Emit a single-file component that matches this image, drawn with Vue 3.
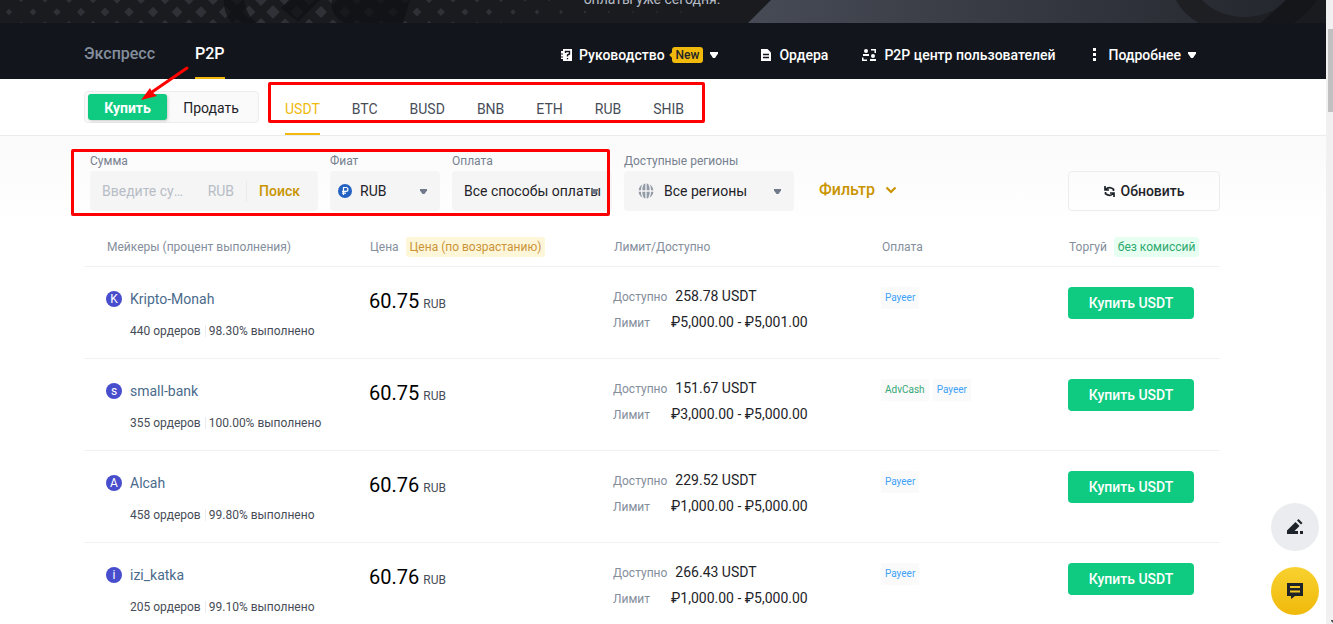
<script setup>
const navTabs = [
  { label: 'Экспресс', active: false },
  { label: 'P2P', active: true },
]
const coins = ['USDT', 'BTC', 'BUSD', 'BNB', 'ETH', 'RUB', 'SHIB']
const offers = [
  { letter: 'K', name: 'Kripto-Monah', orders: '440 ордеров', rate: '98.30% выполнено', price: '60.75', available: '258.78 USDT', limit: '₽5,000.00 - ₽5,001.00', methods: ['Payeer'] },
  { letter: 's', name: 'small-bank', orders: '355 ордеров', rate: '100.00% выполнено', price: '60.75', available: '151.67 USDT', limit: '₽3,000.00 - ₽5,000.00', methods: ['AdvCash', 'Payeer'] },
  { letter: 'A', name: 'Alcah', orders: '458 ордеров', rate: '99.80% выполнено', price: '60.76', available: '229.52 USDT', limit: '₽1,000.00 - ₽5,000.00', methods: ['Payeer'] },
  { letter: 'i', name: 'izi_katka', orders: '205 ордеров', rate: '99.10% выполнено', price: '60.76', available: '266.43 USDT', limit: '₽1,000.00 - ₽5,000.00', methods: ['Payeer'] },
]

function diamond(cx, cy) {
  const r = Math.max(1, cx < 260 ? 3 + cx / 70 : 7 - (cx - 260) / 60)
  return `M${cx - r} ${cy}L${cx} ${cy - r}L${cx + r} ${cy}L${cx} ${cy + r}Z`
}
const diamonds = []
for (let i = 0; i < 29; i++) {
  diamonds.push(diamond(9 + i * 24, 12))
  if (i < 24) diamonds.push(diamond(21 + i * 24, -1), diamond(21 + i * 24, 25))
}
const diamondPath = diamonds.join('')
</script>

<template>
  <div class="page">
    <div class="content">
      <div class="banner">
        <svg class="banner-art" width="1326" height="23" viewBox="0 0 1326 23" aria-hidden="true">
          <defs>
            <linearGradient id="steel" x1="0" x2="1">
              <stop offset="0" stop-color="#474b55" />
              <stop offset="1" stop-color="#24272e" />
            </linearGradient>
          </defs>
          <path :d="diamondPath" fill="#303136" />
          <path d="M224 0h20q2 14 12 23h-24q-9-10-8-23ZM281 8l8-8h31l-22 22ZM332 0h78l-7 23h-59q-15-9-12-23Z" fill="#101114" opacity=".75" />
          <path d="M771 0h516l-23 23H748Z" fill="url(#steel)" />
          <path d="M1176 0h26q16 17 44 17 22 0 44-17h27q-12 15-25 23h-93q-16-9-23-23Z" fill="#1e1f23" />
          <path d="M1286 0h31q-10 15-24 23h-32Z" fill="#15161a" />
        </svg>
        <p class="banner-text">оплаты уже сегодня.</p>
      </div>

      <header class="topnav">
        <nav class="nav-tabs">
          <a v-for="tab in navTabs" :key="tab.label" href="#" :class="{ active: tab.active }">{{ tab.label }}</a>
        </nav>
        <nav class="nav-links">
          <a href="#" class="guide">
            <svg width="11" height="14" viewBox="0 0 11 14"><path d="M2 1h9v12H2v-2H0V9.500h2v-1H0v-2h2v-1H0V3h2z" fill="#fff" /><path d="M4.500 5V3.500h4V6L6.500 7v1.500M6.500 10v1.300" fill="none" stroke="#12161c" stroke-width="1.400" /></svg>
            <span>Руководство</span>
            <b class="new">New</b>
            <svg class="caret" width="8" height="6" viewBox="0 0 8 6"><path d="M0 0h8v1.500L5 6H3L0 1.500z" fill="currentColor" /></svg>
          </a>
          <a href="#">
            <svg width="12" height="14" viewBox="0 0 12 14"><path d="M1 1h6.500L11 4.500V13H1z" fill="#fff" /><path d="M3 6.500h6M3 9.500h6" stroke="#12161c" stroke-width="1.400" /></svg>
            <span>Ордера</span>
          </a>
          <a href="#">
            <svg width="15" height="14" viewBox="0 0 15 14" fill="#fff"><circle cx="4" cy="3" r="2" /><path d="M1 6h6v2H1zM9 1h5v4h-1.500V2.500H9zM0 9.500h1.500v2H5V13H0z" /><circle cx="11" cy="8" r="2" /><path d="M8 11h6v2H8z" /></svg>
            <span>P2P центр пользователей</span>
          </a>
          <a href="#" class="details">
            <svg width="4" height="14" viewBox="0 0 4 14"><path d="M0 0h3v3H0zM0 5h3v3H0zM0 10h3v3H0z" fill="#fff" /></svg>
            <span>Подробнее</span>
            <svg class="caret" width="8" height="6" viewBox="0 0 8 6"><path d="M0 0h8v1.500L5 6H3L0 1.500z" fill="currentColor" /></svg>
          </a>
        </nav>
      </header>

      <section class="trade-bar">
        <div class="side-switch">
          <button type="button" class="on">Купить</button>
          <button type="button">Продать</button>
        </div>
        <nav class="coins">
          <a v-for="(coin, i) in coins" :key="coin" href="#" :class="{ active: i === 0 }">{{ coin }}</a>
        </nav>
      </section>

      <main>
        <form class="filters" @submit.prevent>
          <div class="field amount">
            <label for="amount">Сумма</label>
            <div class="box">
              <input id="amount" type="text" placeholder="Введите сумму" />
              <span class="unit">RUB</span>
              <button type="submit">Поиск</button>
            </div>
          </div>
          <div class="field fiat">
            <label for="fiat">Фиат</label>
            <div class="box">
              <svg class="lead" width="14" height="14" viewBox="0 0 14 14"><circle cx="7" cy="7" r="7" fill="#2463c2" /><path d="M5.500 11V3.500H8a1.900 1.900 0 0 1 0 3.800H4M4 9.200h4" fill="none" stroke="#fff" stroke-width="1.200" /></svg>
              <select id="fiat"><option>RUB</option></select>
              <svg class="caret" width="7" height="5" viewBox="0 0 7 5"><path d="M0 0h7v1.500L4.500 5h-2L0 1.500z" fill="currentColor" /></svg>
            </div>
          </div>
          <div class="field payment">
            <label for="payment">Оплата</label>
            <div class="box">
              <select id="payment"><option>Все способы оплаты</option></select>
              <svg class="caret" width="7" height="5" viewBox="0 0 7 5"><path d="M0 0h7v1.500L4.500 5h-2L0 1.500z" fill="currentColor" /></svg>
            </div>
          </div>
          <div class="field region">
            <label for="region">Доступные регионы</label>
            <div class="box">
              <svg class="lead" width="16" height="16" viewBox="0 0 16 16"><circle cx="8" cy="8" r="7.500" fill="#929aa5" /><path d="M0 8h16M8 0v16M5.500 0Q1.500 8 5.500 16M10.500 0Q14.500 8 10.500 16" fill="none" stroke="#f5f5f5" stroke-width="1.300" /></svg>
              <select id="region"><option>Все регионы</option></select>
              <svg class="caret" width="7" height="5" viewBox="0 0 7 5"><path d="M0 0h7v1.500L4.500 5h-2L0 1.500z" fill="currentColor" /></svg>
            </div>
          </div>
          <button type="button" class="more">
            Фильтр
            <svg width="12" height="8" viewBox="0 0 12 8"><path d="M1.500 1.500L6 6l4.500-4.500" fill="none" stroke="currentColor" stroke-width="2.200" /></svg>
          </button>
          <button type="button" class="refresh">
            <svg width="11" height="11" viewBox="0 0 11 11" fill="none" stroke="currentColor" stroke-width="1.700"><path d="M1 0v4h4M1.500 3.500Q5 0 9.500 3.300V5M10 11V7H6M9.500 7.500Q6 11 1.500 7.700V6" /></svg>
            Обновить
          </button>
        </form>

        <table class="offers">
          <colgroup><col class="c-maker" /><col class="c-price" /><col class="c-limit" /><col class="c-pay" /><col /></colgroup>
          <thead>
            <tr>
              <th>Мейкеры (процент выполнения)</th>
              <th>Цена <mark class="sort">Цена (по возрастанию)</mark></th>
              <th>Лимит/Доступно</th>
              <th>Оплата</th>
              <th>Торгуй <mark class="free">без комиссий</mark></th>
            </tr>
          </thead>
          <tbody>
            <tr v-for="offer in offers" :key="offer.name">
              <td>
                <div class="maker"><i>{{ offer.letter }}</i><a href="#">{{ offer.name }}</a></div>
                <div class="stats"><span>{{ offer.orders }}</span><span>{{ offer.rate }}</span></div>
              </td>
              <td><div class="price"><strong>{{ offer.price }}</strong><small>RUB</small></div></td>
              <td>
                <dl>
                  <div><dt>Доступно</dt><dd>{{ offer.available }}</dd></div>
                  <div><dt class="limit">Лимит</dt><dd>{{ offer.limit }}</dd></div>
                </dl>
              </td>
              <td>
                <div class="methods"><span v-for="m in offer.methods" :key="m" :class="m.toLowerCase()">{{ m }}</span></div>
              </td>
              <td><button type="button" class="buy">Купить USDT</button></td>
            </tr>
          </tbody>
        </table>
      </main>
    </div>

    <div class="scroll-track">
      <div class="scroll-thumb"></div>
      <svg width="5" height="4" viewBox="0 0 5 4" aria-hidden="true"><path d="M3 0h2v3L3 1z" fill="#505050" /></svg>
    </div>

    <div class="floating">
      <button type="button" class="edit" aria-label="Отзыв">
        <svg width="18" height="18" viewBox="0 0 18 18" fill="#1e2329"><path d="M1 12.500L9.500 4l4 4-5 5H12v3H1zM11 2.500L12.500 1l4 4L15 6.500zM14 13h3v3h-3z" /></svg>
      </button>
      <button type="button" class="chat" aria-label="Чат">
        <svg width="18" height="18" viewBox="0 0 18 18"><path d="M1 1h16v13H9l-4 3v-3H1z" fill="#1e2329" /><path d="M4 5h10M4 9.500h10" stroke="#f4c421" stroke-width="2" /></svg>
      </button>
    </div>

    <div class="callout coins-callout"></div>
    <div class="callout filters-callout"></div>
    <svg class="arrow" width="48" height="36" viewBox="0 0 48 36" aria-hidden="true"><path d="M46 2L11 26" stroke="#f00" stroke-width="3" stroke-linecap="round" /><path d="M0 34L9 22l2 4 5 4z" fill="#f00" /></svg>
  </div>
</template>

<style>
body {
  background: #fff;
}
</style>

<style scoped>
.page {
  position: relative;
  display: flex;
  height: 100vh;
  overflow: hidden;
  font-family: Roboto, "Noto Sans", sans-serif;
  font-size: 14px;
  line-height: 20px;
  color: #1e2329;
}
.page * { box-sizing: border-box; }
a { color: inherit; text-decoration: none; }
button, input, select { font: inherit; color: inherit; }
button { border: 0; padding: 0; background: none; cursor: pointer; }
svg { flex: none; }
.content { flex: 1; min-width: 0; }

.banner {
  position: relative;
  display: flex;
  align-items: flex-end;
  justify-content: center;
  height: 23px;
  padding-bottom: 14px;
  overflow: hidden;
  background: #1a1b1f;
}
.banner-art { position: absolute; left: 0; top: 0; }
.banner-text { position: relative; margin: 0; padding-right: 22px; color: #b7bdc6; }

.topnav {
  display: flex;
  justify-content: space-between;
  height: 56px;
  padding: 0 130px 0 84px;
  background: #12161c;
  color: #fff;
}
.nav-tabs { display: flex; gap: 40px; font-size: 16px; font-weight: 500; }
.nav-tabs a { padding-top: 21px; color: #848e9c; }
.nav-tabs .active { color: #fff; border-bottom: 2px solid #f0b90b; }
.nav-links { display: flex; align-items: center; gap: 34px; padding-top: 8px; font-weight: 500; }
.nav-links a { display: flex; align-items: center; gap: 7px; }
.nav-links .guide { padding-right: 8px; }
.nav-links .details { padding-left: 4px; }
.details span { margin-left: 4px; }
.new {
  position: relative;
  padding: 0 4px;
  border-radius: 3px;
  background: #f0b90b;
  color: #1e2329;
  font-size: 12px;
  line-height: 16px;
  font-weight: 500;
}
.new::before {
  content: "";
  position: absolute;
  left: -2px;
  top: 6px;
  width: 4px;
  height: 4px;
  background: #f0b90b;
  transform: rotate(45deg);
}

.trade-bar {
  display: flex;
  height: 57px;
  padding: 0 84px;
  border-bottom: 1px solid #eaecef;
}
.side-switch {
  display: flex;
  align-self: center;
  width: 175px;
  height: 32px;
  padding: 2px 3px;
  border: 1px solid #eaecef;
  border-radius: 4px;
  background: #fafafa;
}
.side-switch button { flex: 1; border-radius: 3px; padding-top: 2px; }
.side-switch .on { flex: 0 0 79px; background: #0ecb81; color: #fff; font-weight: 700; box-shadow: 1px 1px 3px #0003; }
.coins { display: flex; gap: 32px; margin-left: 26px; color: #474d57; }
.coins a { padding-top: 20px; }
.coins .active { color: #f0b90b; border-bottom: 2px solid #f0b90b; }

main { padding: 0 106px 0 84px; background: linear-gradient(#fafafa, #fff 90px); }
.filters { display: flex; align-items: flex-end; padding: 15px 0 0 6px; height: 75px; }
.field { margin-right: 12px; }
.field label { display: block; font-size: 12px; color: #76808f; }
.box { display: flex; align-items: center; height: 40px; border-radius: 4px; background: #f5f5f5; padding: 0 13px 0 12px; position: relative; }
.box .caret { color: #707a8a; pointer-events: none; }
.box select { flex: 1; min-width: 0; padding: 0; border: 0; background: none; appearance: none; outline: 0; }
.amount { width: 228px; }
.amount input { flex: 1; min-width: 0; padding: 0; border: 0; background: none; outline: 0; text-overflow: ellipsis; }
.amount input::placeholder { color: #b7bdc6; opacity: 1; }
.unit { margin: 0 12px 0 18px; color: #b7bdc6; }
.amount button { height: 22px; padding: 0 5px 0 12px; border-left: 1px solid #eaecef; color: #c99400; font-weight: 500; }
.fiat { width: 110px; }
.fiat .box { padding-left: 8px; gap: 8px; }
.payment { width: 160px; }
.payment .box { padding-right: 0; }
.payment .caret { position: absolute; right: 14px; }
.region { width: 170px; }
.region .box { padding-left: 14px; gap: 10px; }
.lead { display: block; }
.more { display: flex; align-items: center; gap: 10px; height: 40px; margin-left: 13px; padding-bottom: 2px; color: #c99400; font-size: 16px; font-weight: 500; }
.refresh {
  display: flex;
  align-items: center;
  justify-content: center;
  gap: 6px;
  width: 152px;
  height: 40px;
  margin-left: auto;
  border: 1px solid #eaecef;
  border-radius: 4px;
  font-weight: 500;
}

.offers { width: 100%; border-collapse: collapse; table-layout: fixed; }
.c-maker { width: 263px; }
.c-price { width: 244px; }
.c-limit { width: 268px; }
.c-pay { width: 187px; }
.offers th { height: 55px; padding: 18px 0 0 23px; text-align: left; font-size: 12px; font-weight: 400; color: #848e9c; white-space: nowrap; }
.offers tr { border-bottom: 1px solid #f0f1f3; }
.offers td { height: 92px; padding: 20px 0 0 22px; vertical-align: top; white-space: nowrap; }
mark { display: inline-block; margin-left: 4px; padding: 0 4px; border-radius: 3px; }
.sort { background: #fef6d8; color: #c99438; }
.free { background: #e6fff1; color: #2ea86f; }
.maker { display: flex; align-items: center; gap: 8px; height: 24px; color: #4a6b8c; }
.maker i {
  width: 16px;
  height: 16px;
  border-radius: 50%;
  background: #474dcc;
  color: #fff;
  font-size: 12px;
  line-height: 16px;
  font-style: normal;
  text-align: center;
}
.stats { display: flex; padding: 14px 0 0 24px; font-size: 12px; line-height: 12px; color: #474d57; }
.stats span + span { margin-left: 4px; padding-left: 3px; border-left: 1px solid #eaecef; }
.price { display: flex; align-items: baseline; gap: 4px; line-height: 28px; }
.price strong { font-size: 20px; font-weight: 400; color: #000; }
.price small { font-size: 12px; color: #474d57; }
dl { margin: 0; line-height: 18px; }
dl div { display: flex; height: 26px; align-items: baseline; }
dt { font-size: 12px; color: #848e9c; margin-right: 8px; }
dt.limit { width: 50px; }
dd { margin: 0; }
.methods { display: flex; gap: 4px; font-size: 10px; line-height: 22px; }
.methods span { padding: 0 4px; border-radius: 2px; background: #fafafa; }
.methods .payeer { color: #3fa2f7; }
.methods .advcash { color: #35a877; }
.buy { width: 126px; height: 32px; border-radius: 4px; background: #0ecb81; color: #fff; font-weight: 500; }

.scroll-track { display: flex; flex-direction: column; justify-content: space-between; width: 7px; background: #f1f1f1; padding: 29px 0 0 2px; }
.scroll-thumb { height: 83px; background: #c1c1c1; }
.floating { position: absolute; right: 14px; bottom: 9px; display: grid; gap: 16px; }
.floating button { display: grid; place-items: center; width: 48px; height: 48px; border-radius: 50%; }
.edit { background: #eaecef; }
.chat { background: linear-gradient(#f8d12f, #f0b90b); }
.callout { position: absolute; border: 3px solid #f00; border-radius: 2px; pointer-events: none; }
.coins-callout { left: 268px; top: 82px; width: 437px; height: 41px; }
.filters-callout { left: 71px; top: 149px; width: 539px; height: 67px; }
.arrow { position: absolute; left: 141px; top: 66px; pointer-events: none; }
</style>
